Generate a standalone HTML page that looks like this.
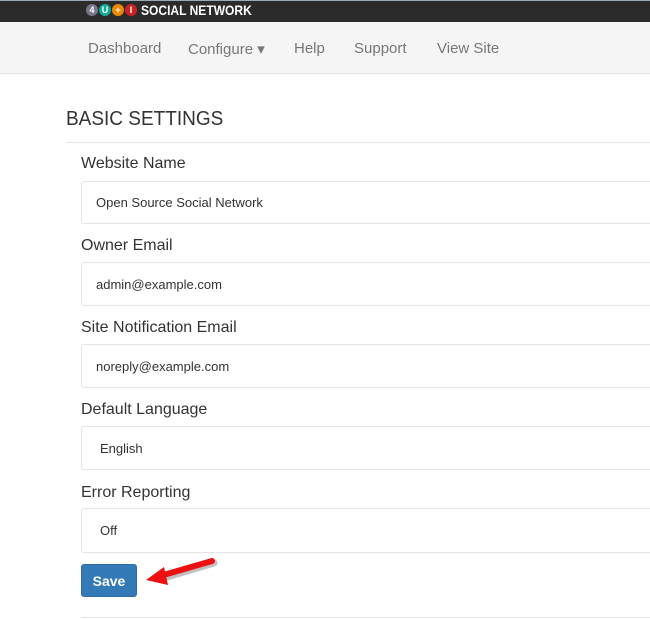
<!DOCTYPE html><html><head><style>
body{margin:0;width:650px;height:619px;overflow:hidden;background:#fff;font-family:"Liberation Sans",sans-serif;position:relative}
.top{position:absolute;left:0;top:0;width:650px;height:22px;background:#2b2b2b;border-top:1px solid #9ab}
.logo{position:absolute;left:86px;top:3px;display:flex;gap:1px}
.logo span{width:12px;height:12px;border-radius:50%;color:#fff;font:bold 9px "Liberation Sans";text-align:center;line-height:12px}
.brand{position:absolute;left:141px;top:1px;color:#fff;font:bold 14px "Liberation Sans";transform:scaleX(.86);transform-origin:left}
.nav{position:absolute;top:22px;left:0;width:650px;height:51px;background:#f5f5f5;border-bottom:1px solid #e3e3e3}
.nav a{position:absolute;top:18px;color:#777;font-size:15px}
h1{position:absolute;left:66px;top:108px;margin:0;font:normal 20px "Liberation Sans";color:#333;transform:scaleX(.95);transform-origin:left}
.hr{position:absolute;left:66px;top:142px;width:584px;border-top:1px solid #e5e5e5}
.lbl{position:absolute;left:81px;font-size:16px;color:#333}
.in{position:absolute;left:81px;width:580px;border:1px solid #e5e5e5;border-radius:3px;font-size:13px;color:#333;box-sizing:border-box;padding-left:14px}
.btn{position:absolute;left:81px;top:564px;width:56px;height:33px;background:#337ab7;border:1px solid #2e6da4;border-radius:3px;color:#fff;font:bold 14px "Liberation Sans";text-align:center;line-height:33px;box-sizing:border-box}
</style></head><body>
<div class="top"><div class="logo"><span style="background:#778">4</span><span style="background:#1a9">U</span><span style="background:#e80">+</span><span style="background:#c22">I</span></div><div class="brand">SOCIAL NETWORK</div></div>
<div class="nav"><a style="left:88px">Dashboard</a><a style="left:188px">Configure ▾</a><a style="left:294px">Help</a><a style="left:354px">Support</a><a style="left:437px">View Site</a></div>
<h1>BASIC SETTINGS</h1><div class="hr"></div>
<div class="lbl" style="top:155px">Website Name</div><div class="in" style="top:181px;height:43px;line-height:42px">Open Source Social Network</div>
<div class="lbl" style="top:237px">Owner Email</div><div class="in" style="top:262px;height:44px;line-height:43px">admin@example.com</div>
<div class="lbl" style="top:319px">Site Notification Email</div><div class="in" style="top:344px;height:44px;line-height:43px">noreply@example.com</div>
<div class="lbl" style="top:401px">Default Language</div><div class="in" style="top:426px;height:44px;line-height:43px;padding-left:18px">English</div>
<div class="lbl" style="top:484px">Error Reporting</div><div class="in" style="top:508px;height:45px;line-height:44px;padding-left:18px">Off</div>
<div class="btn">Save</div>
<svg style="position:absolute;left:140px;top:555px" width="80" height="35"><line x1="72" y1="6" x2="18" y2="22" stroke="#333" stroke-opacity=".3" stroke-width="7" stroke-linecap="round" transform="translate(2,2)"/><line x1="72" y1="6" x2="20" y2="21" stroke="#e11" stroke-width="6" stroke-linecap="round"/><polygon points="6,25 24,12 28,30" fill="#e11"/></svg>
<div class="hr" style="left:81px;top:617px;width:569px"></div>
</body></html>
